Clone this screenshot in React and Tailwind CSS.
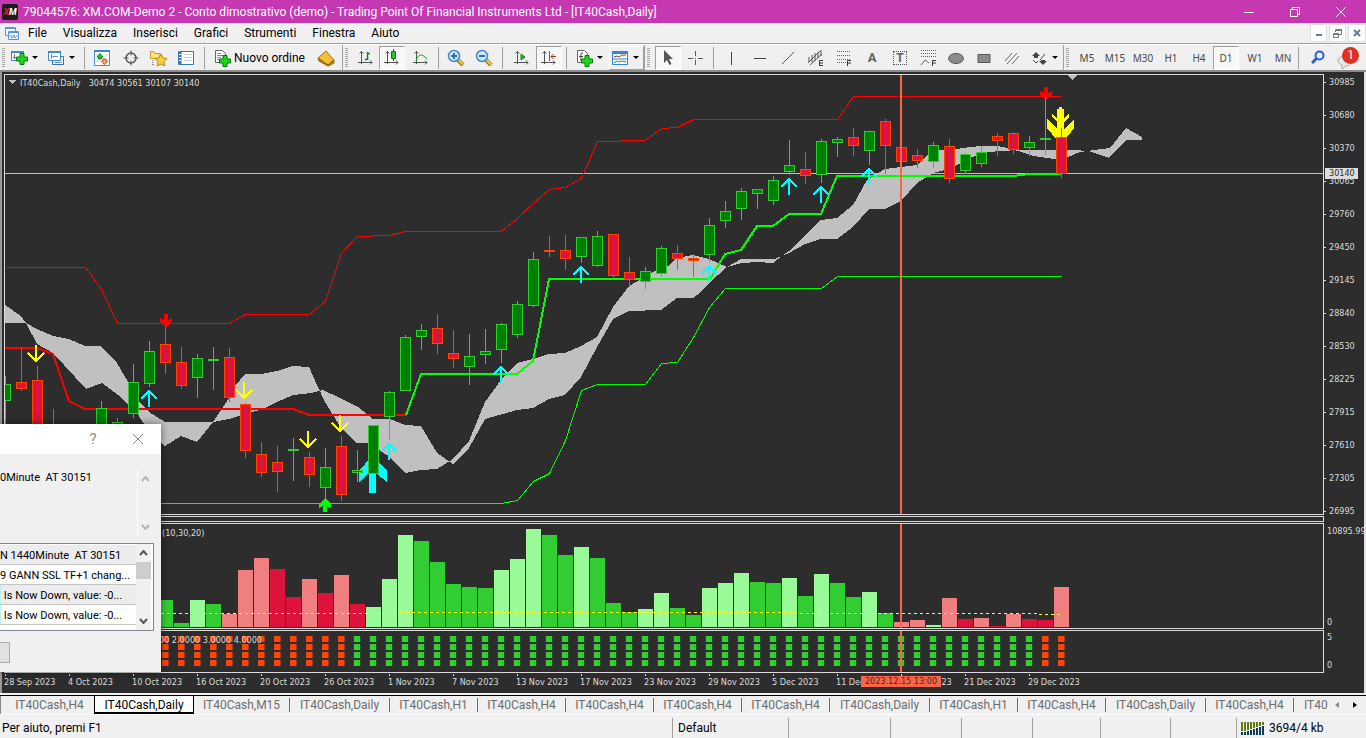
const GREEN = "#32cd32";
const LIGHT = "#98fb98";
const CORAL = "#f08080";
const CRIMSON = "#dc143c";

// high, open/close top, open/close bottom, low, direction
const candles = [
  [376, 384, 401, 436, "u"],
  [348, 382, 389, 391, "d"],
  [366, 380, 436, 440, "d"],
  [409, 430, 440, 446, "d"],
  [430, 440, 446, 450, "d"],
  [430, 440, 446, 450, "u"],
  [401, 408, 436, 440, "u"],
  [418, 422, 440, 444, "u"],
  [364, 382, 414, 418, "u"],
  [341, 351, 384, 387, "u"],
  [323, 344, 363, 374, "d"],
  [347, 362, 386, 389, "d"],
  [354, 358, 378, 398, "u"],
  [347, 359, 361, 390, "u"],
  [348, 357, 398, 402, "d"],
  [403, 404, 451, 458, "d"],
  [442, 454, 473, 477, "d"],
  [446, 462, 472, 492, "d"],
  [438, 449, 451, 481, "u"],
  [452, 457, 475, 487, "d"],
  [448, 467, 488, 500, "u"],
  [436, 446, 495, 501, "d"],
  [450, 470, 473, 482, "u"],
  [425, 425, 474, 474, "u"],
  [391, 392, 417, 440, "u"],
  [335, 337, 391, 391, "u"],
  [324, 330, 337, 350, "u"],
  [314, 328, 344, 354, "d"],
  [330, 353, 359, 368, "d"],
  [334, 356, 367, 385, "u"],
  [329, 351, 355, 364, "u"],
  [323, 324, 350, 363, "u"],
  [301, 304, 335, 338, "u"],
  [252, 259, 306, 307, "u"],
  [236, 250, 252, 257, "d"],
  [235, 250, 259, 270, "d"],
  [237, 237, 257, 263, "u"],
  [231, 236, 266, 267, "u"],
  [234, 234, 276, 279, "d"],
  [257, 272, 280, 287, "d"],
  [267, 271, 282, 289, "u"],
  [246, 248, 274, 277, "u"],
  [245, 253, 259, 270, "d"],
  [254, 258, 261, 277, "d"],
  [218, 225, 255, 262, "u"],
  [201, 211, 221, 228, "u"],
  [188, 191, 209, 220, "u"],
  [189, 189, 194, 209, "u"],
  [176, 180, 201, 205, "u"],
  [140, 165, 172, 175, "u"],
  [152, 169, 176, 184, "d"],
  [139, 141, 175, 183, "u"],
  [137, 139, 143, 157, "u"],
  [128, 137, 146, 156, "d"],
  [131, 131, 151, 165, "u"],
  [119, 121, 146, 174, "d"],
  [125, 147, 162, 162, "d"],
  [149, 155, 161, 168, "d"],
  [142, 145, 162, 168, "u"],
  [139, 146, 179, 183, "d"],
  [153, 154, 171, 174, "u"],
  [146, 152, 164, 167, "u"],
  [133, 136, 141, 156, "d"],
  [132, 133, 150, 154, "d"],
  [136, 142, 148, 156, "u"],
  [97, 138, 140, 155, "u"],
  [128, 137, 174, 178, "d"],
];

// bar top and colour, first bar sits on candle 10
const volumes = [
  [600, GREEN], [623, GREEN], [600, LIGHT], [604, GREEN], [614, CORAL], [570, CORAL],
  [558, CORAL], [569, CRIMSON], [597, CRIMSON], [579, CORAL], [593, CRIMSON], [575, CORAL],
  [604, CRIMSON], [607, LIGHT], [579, LIGHT], [535, LIGHT], [541, GREEN], [562, GREEN],
  [584, GREEN], [587, GREEN], [588, GREEN], [570, LIGHT], [559, LIGHT], [529, LIGHT],
  [535, GREEN], [555, GREEN], [547, LIGHT], [558, GREEN], [603, GREEN], [612, GREEN],
  [609, LIGHT], [593, LIGHT], [608, GREEN], [615, GREEN], [588, LIGHT], [583, LIGHT],
  [573, LIGHT], [582, GREEN], [583, GREEN], [578, LIGHT], [596, GREEN], [574, LIGHT],
  [583, GREEN], [597, GREEN], [592, LIGHT], [613, GREEN], [622, CORAL], [620, CORAL],
  [625, LIGHT], [598, CORAL], [619, CRIMSON], [618, CORAL], [626, CRIMSON], [614, CORAL],
  [619, CRIMSON], [620, CRIMSON], [587, CORAL],
];

const cloud =
  "5,305 21,316 26,323 37,344 53,353 86,389 102,383 118,395 137,413 149,432 165,446 181,436 197,442 213,422 229,398 235,386 245,374 261,374 277,371 293,366 309,367 317,385 325,402 341,428 357,443 368,443 390,457 405,473 421,470 437,469 453,459 469,441 485,402 501,380 517,363 533,359 549,354 565,353 581,346 597,337 613,307 629,286 645,277 653,272 668,266 677,258 693,255 709,259 727,267 742,263 757,262 773,263 782,256 789,251 805,235 821,220 837,218 853,205 867,180 880,172 885,169 901,167 917,165 927,155 933,150 957,149 970,147 981,146 997,146 1008,148 1018,151 1033,156 1055,159 1068,157 1080,152 1087,151 1110,148 1126,128 1142,137 1142,140 1126,140 1109,158 1092,152 1087,151 1075,150 1018,150 987,152 970,158 957,165 949,169 933,173 927,177 917,183 901,201 885,209 869,209 853,227 837,239 821,239 805,244 789,253 775,259 741,259 727,267 709,283 700,293 693,298 677,298 661,310 629,311 613,319 597,347 581,377 565,395 549,399 533,408 517,410 485,419 469,448 453,464 437,453 421,426 405,425 390,419 373,419 358,407 340,398 323,390 311,393 293,395 277,402 263,409 245,414 229,419 213,422 165,422 149,412 140,403 128,382 117,363 101,346 85,346 69,339 53,336 37,329 26,323 5,323";

const prices = [30985, 30680, 30370, 30065, 29760, 29450, 29145, 28840, 28530, 28225, 27915, 27610, 27305, 26995];

const dates = [
  "28 Sep 2023", "4 Oct 2023", "10 Oct 2023", "16 Oct 2023", "20 Oct 2023", "26 Oct 2023",
  "1 Nov 2023", "7 Nov 2023", "13 Nov 2023", "17 Nov 2023", "23 Nov 2023", "29 Nov 2023",
  "5 Dec 2023", "11 Dec 2023", "15 Dec 2023", "21 Dec 2023", "29 Dec 2023",
];

const cyanArrows = [[149, 390], [389, 443], [501, 366], [581, 266], [709, 265], [789, 178], [821, 186], [869, 168]];
const yellowArrows = [[36, 362], [244, 399], [308, 448], [340, 432]];

const menus = ["File", "Visualizza", "Inserisci", "Grafici", "Strumenti", "Finestra", "Aiuto"];
const timeframes = ["M5", "M15", "M30", "H1", "H4", "D1", "W1", "MN"];
const tabs = ["M15", "Daily", "H1", "H4", "H4", "H4", "H4", "Daily", "H1", "H4", "Daily", "H4"];

const cx = (i) => 5 + i * 16;

const Candle = ({ i, data }) => {
  const [high, top, bottom, low, dir] = data;
  const edge = dir === "u" ? "#32cd32" : "#ff4500";
  const fill = dir === "u" ? "#008000" : "#dc143c";
  const x = cx(i);
  return (
    <g>
      <rect x={x} y={high} width="1" height={low - high} fill={edge} />
      <rect x={x - 5} y={top} width="11" height={bottom - top} fill={edge} />
      {bottom - top > 2 && <rect x={x - 4} y={top + 1} width="9" height={bottom - top - 2} fill={fill} />}
    </g>
  );
};

const PriceChart = () => (
  <svg className="block w-full h-full" shapeRendering="crispEdges">
    <g transform="translate(-5 -75)">
      <polygon points={cloud} fill="#c0c0c0" />
      <rect x="5" y="173" width="4000" height="1" fill="#c0c0c0" />
      <g fill="none" transform="translate(.5 .5)">
        <polyline stroke="#f00" points="5,267 85,267 101,289 117,323 229,323 245,314 309,314 325,301 341,253 357,236 389,235 405,231 501,231 517,218 533,203 549,189 565,187 581,178 597,141 645,140 661,128 677,127 693,119 837,119 853,96 1061,96" />
        <polyline stroke="#0f0" points="5,503 501,503 517,500 533,481 549,473 565,440 581,390 597,384 645,384 661,363 677,362 693,337 709,307 725,288 821,288 837,276 1061,276" />
      </g>
      <g fill="none" strokeWidth="2">
        <polyline stroke="#f00" points="5,348 37,348 53,354 69,401 85,409 293,409 309,415 406,415" />
        <polyline stroke="#0f0" points="406,415 421,374 517,374 533,361 549,279 710,279 725,254 741,250 757,226 773,226 789,214 821,214 837,176 1013,176 1029,174 1061,174" />
      </g>
      <path fill="#0ff" d="M372 456l-13 15v11l10-9v20h7v-20l11 9v-11z" />
      <path fill="#ff0" d="M1059 107h3v2h2v9l5-4v3l-5 5v7l10-10v9l-13 17l-14-17v-9l10 10v-7l-5-5v-3l5 4v-9h2z" />
      {candles.map((c, i) => (
        <Candle key={i} i={i} data={c} />
      ))}
      <g fill="none" strokeWidth="2">
        {cyanArrows.map(([x, y]) => (
          <path key={x} stroke="#0ff" d={`M${x} ${y + 1}v16M${x - 8} ${y + 9}l8 -8l8 8`} />
        ))}
        {yellowArrows.map(([x, y]) => (
          <path key={x} stroke="#ff0" d={`M${x} ${y - 1}v-16M${x - 8} ${y - 9}l8 8l8 -8`} />
        ))}
      </g>
      <path fill="#f00" d="M164 314h4v6l4-2v4l-6 5l-6-5v-4l4 2zM1044 87h4v6l4-2v4l-6 5l-6-5v-4l4 2z" />
      <path fill="#0f0" d="M325 498l6 6v4l-4-2v6h-4v-6l-4 2v-4z" />
      <path fill="#32cd32" d="M1045 97h1v5h-1z" />
      <path fill="#c0c0c0" d="M1067 75h10l-5 5zM8 80h8l-4 4z" />
      <rect x="900" y="75" width="2" height="440" fill="#ff6347" />
    </g>
  </svg>
);

const VolumeChart = () => (
  <svg className="block w-full h-full" shapeRendering="crispEdges">
    <g transform="translate(-5 -524)">
      {volumes.map(([top, color], i) => (
        <rect key={i} x={cx(i + 10) - 7} y={top} width="15" height={627 - top} fill={color} />
      ))}
      <path stroke="#ff0" strokeDasharray="3 3" d="M161 613.500H397M400 612.500H797M800 613.500H1037M1039 614.500H1060" />
      <rect x="900" y="524" width="2" height="105" fill="#ff6347" />
    </g>
  </svg>
);

const TrendChart = () => (
  <svg className="block w-full h-full" shapeRendering="crispEdges">
    <g transform="translate(-5 -631)">
      {candles.map((c, i) => {
        const down = i < 22 || i > 64;
        return [636, 644, 652, 660].map((y) => (
          <g key={`${i}-${y}`}>
            <rect x={cx(i) - (down ? 3 : 4)} y={y} width={down ? 7 : 8} height="6" fill={down ? "#a03a28" : "#264f26"} />
            <rect x={cx(i) - 3} y={y} width="6" height="6" fill={down ? "#ff4500" : "#32cd32"} />
          </g>
        ));
      })}
      <rect x="900" y="631" width="2" height="42" fill="#ff6347" />
    </g>
  </svg>
);

const Sep = ({ className }) => (
  <span className={`flex justify-center h-[22px] shrink-0 ${className}`}>
    <span className="w-px bg-[#a0a0a0]"></span>
  </span>
);

const Grip = ({ className, first }) => (
  <span className={`flex items-center h-full shrink-0 pl-[2px] ${first ? "" : "border-l border-[#a0a0a0]"} ${className}`}>
    <svg width="3" height="20" shapeRendering="crispEdges">
      <path stroke="#a8a8a8" strokeWidth="3" strokeDasharray="1 1" d="M1.500 0V20" />
    </svg>
  </span>
);

const pressedLook = "bg-[#f8f8f8] border border-t-[#a0a0a0] border-l-[#a0a0a0] border-b-white border-r-white";

const Tool = ({ className, label, pressed, children }) => (
  <button
    aria-label={label}
    className={`flex items-center justify-center h-6 shrink-0 ${pressed ? pressedLook : ""} ${className}`}
  >
    {children}
  </button>
);

const MenuTool = ({ className, label, children }) => (
  <button aria-label={label} className={`flex items-center gap-1 h-6 shrink-0 ${className}`}>
    {children}
    <svg width="6" height="3" className="shrink-0">
      <path d="M0 0h6l-3 3z" fill="#000" />
    </svg>
  </button>
);

const Icon = ({ children, w = 18 }) => (
  <svg width={w} height="18" viewBox={`0 0 ${w} 18`} fill="none" className="shrink-0">
    {children}
  </svg>
);

const Plus = ({ x = 0, y = 0 }) => (
  <path
    transform={`translate(${x} ${y})`}
    d="M4 0.500h4v3.500h3.500v4H8v3.500H4V8H.5V4H4z"
    fill="#1fd61f"
    stroke="#067a06"
  />
);

const Axes = () => (
  <path d="M4.500 2v13M1 13.500h14M2.500 4.500l2-2 2 2M13 11.500l2 2-2 2" stroke="#555" />
);

const Lens = ({ minus }) => (
  <Icon>
    <path d="M11 11l5 5" stroke="#a07818" strokeWidth="4" />
    <path d="M11.500 11l4.500 4.500" stroke="#f0cc50" strokeWidth="2" />
    <circle cx="7" cy="7" r="5.500" fill="#cfe6fa" stroke="#4488c8" strokeWidth="1.500" />
    <path d={minus ? "M4 7h6" : "M4 7h6M7 4v6"} stroke="#2c6cb0" strokeWidth="2" />
  </Icon>
);

const Toolbar = () => (
  <div className="flex items-center h-7 bg-[#f0f0f0] border-b-2 border-[#8c8c8c] border-t border-t-white overflow-hidden">
    <Grip first className="w-2" />
    <MenuTool label="Nuovo grafico" className="w-[37px] pl-[2px]">
      <Icon>
        <path d="M1.500 2.500h12v9h-12z" fill="#fff" stroke="#4488cc" />
        <path d="M1 3h13" stroke="#4488cc" strokeWidth="2" />
        <path d="M4.500 5v5M3 8.500h6" stroke="#777" />
        <Plus x={6} y={4} />
      </Icon>
    </MenuTool>
    <MenuTool label="Profili" className="w-[37px] pl-[2px]">
      <Icon>
        <path d="M5.500 7.500h11v8h-11z" fill="#e8f2fb" stroke="#3a6ea8" />
        <path d="M1.500 2.500h12v9h-12z" fill="#fff" stroke="#4488cc" />
        <path d="M1 3h13" stroke="#4488cc" strokeWidth="2" />
        <path d="M4 7.500h7M4.500 5v5M7.500 13.500h7" stroke="#6b8fb0" />
      </Icon>
    </MenuTool>
    <Sep className="w-1" />
    <Tool label="Market Watch" className="w-8">
      <Icon>
        <path d="M1.500 1.500h15v15h-15z" fill="#fff" stroke="#4a90d0" />
        <path d="M1 2h16" stroke="#3d86cc" strokeWidth="2" />
        <path d="M3 6h2M3 9h1M3 12h4M12 6h3M13 13h2" stroke="#ccc" />
        <path d="M4 8l3-3.500L10 8H8.500v2h-3V8z" fill="#2cc02c" stroke="#0a8a0a" />
        <path d="M8.500 12H10v-2h3v2h1.500l-3 3.500z" fill="#fbb080" stroke="#d8480c" />
      </Icon>
    </Tool>
    <Tool label="Finestra dati" className="w-[25px]">
      <Icon w={16}>
        <circle cx="8" cy="9" r="5" stroke="#555" strokeWidth="1.500" />
        <path d="M8 1.500v5M8 11.500v5M.5 9h5M10.500 9h5" stroke="#555" />
      </Icon>
    </Tool>
    <Tool label="Navigatore" className="w-[30px]">
      <Icon>
        <path d="M1.500 2.500h3l1.500 2h5v5h-9.500z" fill="#fbe27a" stroke="#c29a20" />
        <path d="M3.500 11v5h3" stroke="#777" strokeDasharray="1 1" />
        <path d="M12 5l2 4 4 .5-3 3 .8 4.500-3.800-2-3.800 2 .8-4.500-3-3 4-.5z" fill="#f8cf3c" stroke="#b8861a" />
      </Icon>
    </Tool>
    <Tool label="Terminale" className="w-[26px]">
      <Icon>
        <path d="M1.500 2.500h15v13h-15z" fill="#fff" stroke="#3778b8" />
        <path d="M3 3v12" stroke="#3778b8" strokeWidth="3" />
        <path d="M7 5.500h8M7 8.500h8M7 11.500h8" stroke="#c4d4e4" />
        <path d="M3 5v1M3 8v1M3 11v1" stroke="#fff" strokeWidth="2" />
      </Icon>
    </Tool>
    <Sep className="w-[10px]" />
    <button className="flex items-center gap-[2px] h-6 w-[101px] pl-[5px] shrink-0 text-xs whitespace-nowrap">
      <Icon>
        <path d="M1.500 1.500h7l3 3v9h-10z" fill="#fff" stroke="#666" />
        <path d="M3 4.500h4M3 6.500h6M3 8.500h4M3 10.500h3" stroke="#888" />
        <Plus x={5} y={6} />
      </Icon>
      Nuovo ordine
    </button>
    <Tool label="MetaEditor" className="w-8">
      <Icon>
        <path d="M1 9l8-7 8 9-6 5z" fill="#f3bf33" stroke="#a87208" />
        <path d="M1 9l1 3 9 5 6-3v-3l-6 5z" fill="#c08a18" stroke="#946208" />
      </Icon>
    </Tool>
    <Grip className="w-[10px]" />
    <Tool label="Grafico a barre" className="w-[27px]">
      <Icon>
        <Axes />
        <path d="M10.500 3v8M8 10.500h2M11 4.500h2" stroke="#0b8a0b" strokeWidth="1.500" />
      </Icon>
    </Tool>
    <Tool label="Grafico a candele" pressed className="w-[26px]">
      <Icon>
        <Axes />
        <path d="M10.500 0v12" stroke="#0b7a0b" />
        <path d="M8.500 2.500h4v7h-4z" fill="#22c822" stroke="#0b7a0b" />
      </Icon>
    </Tool>
    <Tool label="Grafico a linea" className="w-[31px]">
      <Icon>
        <Axes />
        <path d="M4 12c2-6 5-9 11-2" stroke="#2c9a2c" />
      </Icon>
    </Tool>
    <Sep className="w-[5px]" />
    <Tool label="Zoom avanti" className="w-[29px]"><Lens /></Tool>
    <Tool label="Zoom indietro" className="w-7"><Lens minus /></Tool>
    <Sep className="w-[9px]" />
    <Tool label="Scorrimento automatico" className="w-[29px]">
      <Icon>
        <Axes />
        <path d="M8 5l4 3-4 3z" fill="#1cb81c" stroke="#0a8a0a" />
      </Icon>
    </Tool>
    <Tool label="Spostamento grafico" pressed className="w-[26px]">
      <Icon>
        <Axes />
        <path d="M9.500 2v10" stroke="#2a6cb0" />
        <path d="M11 7.500h5M13.500 5l-2.500 2.500 2.500 2.500" stroke="#b03010" />
      </Icon>
    </Tool>
    <Sep className="w-[9px]" />
    <MenuTool label="Indicatori" className="w-[38px] pl-1">
      <Icon>
        <path d="M2.500 1.500h7l3 3v9h-10z" fill="#fff" stroke="#666" />
        <path d="M8 4c-3-1-2 3-2 8M4 7.500h4" stroke="#444" />
        <Plus x={6} y={6} />
      </Icon>
    </MenuTool>
    <MenuTool label="Modelli" className="w-[35px] pl-px border border-t-white border-l-white border-b-[#a0a0a0] border-r-[#a0a0a0]">
      <Icon>
        <path d="M1.500 2.500h15v13h-15z" fill="#fff" stroke="#2f86dc" />
        <path d="M1 3.500h16" stroke="#2f86dc" strokeWidth="3" />
        <path d="M1 10h16" stroke="#2f86dc" />
        <path d="M3 8l3-1 2 1 3-2h4" stroke="#a03018" />
        <path d="M3 14l3-2 2 1 3-1 4 1" stroke="#20a020" />
      </Icon>
    </MenuTool>
    <Grip className="w-[11px]" />
    <Tool label="Cursore" pressed className="w-[26px]">
      <Icon w={16}>
        <path d="M4 1v13l3-3 2.500 5 2-1L9 10h4z" fill="#555" />
      </Icon>
    </Tool>
    <Tool label="Mirino" className="w-7">
      <Icon w={16}>
        <path d="M8.500 2v5M8.500 11v5M1 9.500h5M11 9.500h5M8 9.500h1" stroke="#555" />
      </Icon>
    </Tool>
    <Sep className="w-[9px]" />
    <Tool label="Linea verticale" className="w-[27px]">
      <Icon w={15}><path d="M7.500 3v13" stroke="#444" /></Icon>
    </Tool>
    <Tool label="Linea orizzontale" className="w-[30px]">
      <Icon w={16}><path d="M2 9.500h12" stroke="#444" /></Icon>
    </Tool>
    <Tool label="Trendline" className="w-[26px]">
      <Icon w={16}><path d="M2 15L14 3" stroke="#555" /></Icon>
    </Tool>
    <Tool label="Canale equidistante" className="w-[29px]">
      <Icon w={18}>
        <path d="M1 14L13 2M3 16L15 5M2 8v5M5 6v7M8 4v8M11 3v6M14 1v6" stroke="#555" />
        <path d="M16 11.500h-3.500v5H16M13 14h3" stroke="#333" />
      </Icon>
    </Tool>
    <Tool label="Fibonacci" className="w-7">
      <Icon w={16}>
        <path d="M1 2.500h14M1 6.500h14M1 10.500h14M1 13.500h9" stroke="#666" strokeDasharray="1 1" />
        <path d="M15 11.500h-3.500V17M12 14h3" stroke="#333" />
      </Icon>
    </Tool>
    <Tool label="Testo" className="w-7">
      <span className="text-[13px] font-bold text-[#606060]">A</span>
    </Tool>
    <Tool label="Etichetta" className="w-7">
      <span className="flex items-center justify-center size-[14px] border border-dotted border-[#555] text-[12px] font-bold text-[#606060]">
        T
      </span>
    </Tool>
    <Tool label="Ventaglio" className="w-7">
      <Icon w={16}>
        <path d="M1 1.500h15M1 4.500h15M1 7.500h15" stroke="#666" strokeDasharray="1 1" />
        <path d="M1 16l4-5 4 3" stroke="#666" />
        <path d="M16 11.500h-3.500V17M13 14h3" stroke="#333" />
      </Icon>
    </Tool>
    <Tool label="Ellisse" className="w-7">
      <Icon><ellipse cx="9" cy="9.500" rx="7.500" ry="5" fill="#8c8c8c" stroke="#555" /></Icon>
    </Tool>
    <Tool label="Rettangolo" className="w-7">
      <Icon><path d="M3 5.500h12v8H3z" fill="#8c8c8c" stroke="#555" /></Icon>
    </Tool>
    <Tool label="Linee parallele" className="w-7">
      <Icon w={16}><path d="M1 12l7-8M3 15L13 4M8 15l7-8" stroke="#666" /></Icon>
    </Tool>
    <MenuTool label="Frecce" className="w-[37px] pl-[6px]">
      <Icon w={16}>
        <path d="M4 3l4 4H6v2H2V7H0zM11 16l-4-4h2v-1h4v1h2z" fill="#444" />
        <path d="M1 11l3 3 2-2M13 5l-5 6" stroke="#444" />
      </Icon>
    </MenuTool>
    <Grip className="w-[10px]" />
    {timeframes.map((t) => (
      <button
        key={t}
        className={`h-6 shrink-0 pt-px font-['Noto_Sans'] text-[10px] text-[#4a4a4a] ${t === "D1" ? `w-[26px] mr-[2px] ${pressedLook}` : "w-7"}`}
      >
        {t}
      </button>
    ))}
    <Sep className="w-[2px]" />
    <span className="grow"></span>
    <Tool label="Cerca" className="w-[38px]">
      <Icon w={14}>
        <circle cx="8.500" cy="6.500" r="4" fill="#e8f0ff" stroke="#2f5fd8" strokeWidth="2" />
        <path d="M5.500 9.500L1 14" stroke="#2f5fd8" strokeWidth="3" />
      </Icon>
    </Tool>
    <button aria-label="Notifiche" className="relative flex items-end h-6 w-[29px] shrink-0">
      <svg width="16" height="16" viewBox="0 0 16 16">
        <path d="M8 2c4 0 7 2 7 5s-3 5-6 5l-4 3v-4c-2-1-4-2-4-4 0-3 3-5 7-5z" fill="#e8e8e8" stroke="#aaa" />
      </svg>
      <span className="absolute left-[5px] top-px flex items-center justify-center size-[17px] rounded-full bg-[#e03020] text-white text-xs">
        1
      </span>
    </button>
  </div>
);

const Dialog = () => (
  <div role="dialog" aria-label="Alert" className="absolute left-[-2px] top-[352px] w-[161px] h-[248px] bg-[#f0f0f0] shadow-[0_0_8px_rgba(0,0,0,0.5)] overflow-hidden font-['Roboto'] text-[11px] text-black">
    <div className="flex items-center justify-end h-[30px] bg-white pr-4">
      <button className="w-5 mr-[28px] text-[15px] text-[#8a8a8a]">?</button>
      <button aria-label="Chiudi" className="flex items-center justify-center w-[14px]">
        <svg width="10" height="10"><path d="M0 0l10 10M10 0L0 10" stroke="#888" /></svg>
      </button>
    </div>
    <div className="flex justify-between mt-4 h-[66px]">
      <p className="whitespace-pre leading-4">0Minute  AT 30151</p>
      <div className="flex flex-col items-center justify-between w-6 pr-2 py-[6px] border-l border-white">
        <svg width="9" height="6" fill="none"><path d="M1 5l3.500-4L8 5" stroke="#b4b4b4" strokeWidth="2" /></svg>
        <svg width="9" height="6" fill="none"><path d="M1 1l3.500 4L8 1" stroke="#b4b4b4" strokeWidth="2" /></svg>
      </div>
    </div>
    <div className="flex mt-[7px] w-[154px] h-[88px] border border-l-0 border-[#828790] bg-white pr-[2px]">
      <ul className="flex-1 min-w-0 overflow-hidden pt-px">
        {["N 1440Minute  AT 30151", "9 GANN SSL TF+1 chang...", " Is Now Down, value: -0...", " Is Now Down, value: -0..."].map((row, i) => (
          <li
            key={i}
            className={`h-5 leading-[22px] border-b border-[#c4c4c4] whitespace-pre ${i % 2 ? "bg-white" : "bg-[#ececec]"} ${i > 1 ? "border-l border-l-[#bfeef2]" : ""}`}
          >
            {row}
          </li>
        ))}
      </ul>
      <div className="flex flex-col items-center justify-between w-[15px] bg-[#f0f0f0] py-[6px]">
        <svg width="9" height="6" fill="none"><path d="M1 5l3.500-4L8 5" stroke="#555" strokeWidth="2" /></svg>
        <span className="w-full h-[17px] mb-[34px] bg-[#cdcdcd]"></span>
        <svg width="9" height="6" fill="none"><path d="M1 1l3.500 4L8 1" stroke="#555" strokeWidth="2" /></svg>
      </div>
    </div>
    <button aria-label="OK" className="block mt-[11px] w-[10px] h-[21px] bg-[#e1e1e1] border border-l-0 border-[#adadad]"></button>
  </div>
);

const frame = "relative flex-1 min-w-0 overflow-hidden border border-[#dcdcdc]";

const ChartWindow = () => (
  <main className="relative flex flex-col gap-px bg-[#2d2d2d] border-l-2 border-l-[#9a9a9a] border-r-2 border-r-[#e3e3e3] pl-[2px] pt-[2px] font-['DejaVu_Sans_Condensed'] text-[9px] text-[#dcdcdc]">
    <section className="flex h-[441px]">
      <div className={frame}>
        <PriceChart />
        <p className="absolute left-[15px] top-[2px] flex gap-2 leading-3">
          <span>IT40Cash,Daily</span>
          <span>30474 30561 30107 30140</span>
        </p>
      </div>
      <div className="relative w-10 pt-[2px]">
        <ul>
          {prices.map((p) => (
            <li key={p} className="h-[33px] last:h-3 leading-3">
              <span className="flex items-center gap-[3px]">
                <span className="w-[2px] h-px bg-[#dcdcdc]"></span>
                {p}
              </span>
            </li>
          ))}
        </ul>
        <span className="absolute left-px top-[94px] w-[33px] pl-1 h-[11px] leading-[11px] bg-[#dcdcdc] text-[#2d2d2d]">30140</span>
      </div>
    </section>
    <section className="flex h-[6px]">
      <div className={frame}></div>
      <div className="w-10"></div>
    </section>
    <section className="flex h-[106px]">
      <div className={frame}>
        <VolumeChart />
        <p className="absolute left-[157px] top-[3px] leading-3">(10,30,20)</p>
      </div>
      <div className="flex flex-col justify-between w-10 pl-[3px] pt-[2px] pb-[1px] leading-3 overflow-hidden">
        <span>10895.99</span>
        <span>0</span>
      </div>
    </section>
    <section className="flex h-[43px]">
      <div className={frame}>
        <TrendChart />
        <p className="absolute left-[154px] top-[3px] leading-3">00 2.0000 3.0000 4.0000</p>
      </div>
      <div className="flex flex-col justify-between w-10 pl-[3px] pt-px pb-[2px] leading-3">
        <span>5</span>
        <span>0</span>
      </div>
    </section>
    <section className="relative flex h-[19px] overflow-hidden">
      {dates.map((d) => (
        <div key={d} className="w-16 shrink-0 pl-px">
          <span className="block w-px h-[2px] bg-[#dcdcdc]"></span>
          <span className="block -ml-px leading-3 whitespace-nowrap">{d}</span>
        </div>
      ))}
      <span className="absolute left-[857px] top-[2px] w-20 h-[11px] leading-[11px] text-center bg-[#ff6347] text-[#2d2d2d]">
        2023.12.15 13:00
      </span>
    </section>
    <Dialog />
  </main>
);

const tabWidth = { M15: "w-24", Daily: "w-[100px]", H1: "w-[88px]", H4: "w-[88px]" };

const App = () => {
  return (
    <div className="flex flex-col bg-[#f0f0f0] font-['Roboto',sans-serif] text-black overflow-hidden">
      <header className="flex items-center h-[23px] bg-[#c538b2] pl-[2px] pr-[2px] text-white text-xs">
        <span className="flex items-center justify-center size-4 rounded-xs bg-[#1c1c1c] text-[9px] font-bold italic">
          <span className="text-[#e02020]">X</span>M
        </span>
        <h1 className="pl-[5px] whitespace-nowrap">
          79044576: XM.COM-Demo 2 - Conto dimostrativo (demo) - Trading Point Of Financial Instruments Ltd - [IT40Cash,Daily]
        </h1>
        <div className="flex ml-auto">
          <button aria-label="Riduci a icona" className="flex items-center justify-center w-[46px] h-[22px]">
            <svg width="10" height="10"><path d="M0 5.500h10" stroke="#fff" /></svg>
          </button>
          <button aria-label="Ripristina" className="flex items-center justify-center w-[46px] h-[22px]">
            <svg width="10" height="10" fill="none" shapeRendering="crispEdges">
              <path d="M.5 2.500h7v7h-7zM2.500 2V.5h7v7H8" stroke="#fff" />
            </svg>
          </button>
          <button aria-label="Chiudi" className="flex items-center justify-center w-[46px] h-[22px]">
            <svg width="10" height="10"><path d="M0 0l10 10M10 0L0 10" stroke="#fff" /></svg>
          </button>
        </div>
      </header>
      <nav className="flex items-center h-[21px] border-b border-[#a0a0a0] pl-[5px] text-xs">
        <svg width="15" height="15" fill="none">
          <path d="M.5 1.500h10v8H.5z" fill="#fff" stroke="#5a94d8" />
          <path d="M3.500 5.500h10v8h-10z" fill="#eaf3fd" stroke="#5a94d8" />
          <path d="M.5 2.500h10M3.500 6.500h10M5 9l2 3 2-3 1 3 2-2" stroke="#5a94d8" />
        </svg>
        {menus.map((m) => (
          <button key={m} className="px-2">{m}</button>
        ))}
        <div className="flex gap-[2px] ml-auto">
          <button aria-label="Riduci grafico" className="flex items-center justify-center w-[17px] h-[18px] bg-white border border-[#e0e0e0]">
            <svg width="8" height="8"><path d="M1 6h6" stroke="#6b7c90" strokeWidth="2" /></svg>
          </button>
          <button aria-label="Ripristina grafico" className="flex items-center justify-center w-[17px] h-[18px] bg-white border border-[#e0e0e0]">
            <svg width="9" height="9" fill="none">
              <path d="M.5 4.500h5v4h-5zM2.500 3V.5h6v5H6M3 1.500h5M1 5.500h4" stroke="#6b7c90" />
            </svg>
          </button>
          <button aria-label="Chiudi grafico" className="flex items-center justify-center w-[18px] h-[18px] bg-white border border-[#e0e0e0]">
            <svg width="8" height="8"><path d="M1 1l6 6M7 1L1 7" stroke="#6b7c90" strokeWidth="2" /></svg>
          </button>
        </div>
      </nav>
      <Toolbar />
      <ChartWindow />
      <div className="relative flex h-[22px] pt-[2px] border-b border-white text-xs text-[#6d6d6d]">
        <div className="flex flex-1 min-w-0 overflow-hidden border-t border-black">
          <button className="flex items-center justify-center w-[94px] shrink-0 h-[18px] pl-1 border-l border-[#888]">IT40Cash,H4</button>
          <button className="flex items-center justify-center w-[100px] shrink-0 h-[18px] pt-px bg-white border-x border-b-2 border-black text-black">IT40Cash,Daily</button>
          {tabs.map((t, i) => (
            <button key={i} className={`flex items-center h-[18px] shrink-0 ${tabWidth[t]}`}>
              <span className="flex-1 text-center">IT40Cash,{t}</span>
              <span className="w-px h-[14px] bg-[#6d6d6d]"></span>
            </button>
          ))}
          <button className="flex items-center h-[18px] w-[34px] shrink-0 overflow-hidden pl-[10px]">IT40Cash,H4</button>
          <div className="flex grow shrink-0 items-center justify-end gap-[14px] pr-[9px] w-[38px] h-[18px]">
            <button aria-label="Schede precedenti"><svg width="4" height="6"><path d="M4 0v6L0 3z" fill="#888" /></svg></button>
            <button aria-label="Schede successive"><svg width="4" height="6"><path d="M0 0v6l4-3z" fill="#000" /></svg></button>
          </div>
        </div>
      </div>
      <footer className="flex h-[23px] pt-[3px] text-xs">
        <p className="flex flex-1 items-center pl-[2px] min-w-0 whitespace-nowrap">Per aiuto, premi F1</p>
        <p className="flex items-center w-[116px] border-l border-[#a0a0a0] pl-[5px]">Default</p>
        <span className="w-[102px] border-l border-[#a0a0a0]"></span>
        <span className="w-[71px] border-l border-[#a0a0a0]"></span>
        <span className="w-[71px] border-l border-[#a0a0a0]"></span>
        <span className="w-[68px] border-l border-[#a0a0a0]"></span>
        <span className="w-[70px] border-l border-[#a0a0a0]"></span>
        <span className="w-[66px] border-l border-[#a0a0a0]"></span>
        <p className="flex items-center gap-1 w-[130px] border-l border-[#a0a0a0] pl-1 whitespace-nowrap">
          <svg width="24" height="13" shapeRendering="crispEdges">
            {[9, 9, 8, 7, 6, 5, 4, 3].map((h, i) => (
              <g key={i}>
                <rect x={i * 3} y="0" width="2" height={h} fill="#5f7a10" />
                <rect x={i * 3} y={h + 1} width="2" height={12 - h} fill="#0c3c5c" />
              </g>
            ))}
          </svg>
          3694/4 kb
        </p>
      </footer>
    </div>
  );
};

export default App;
